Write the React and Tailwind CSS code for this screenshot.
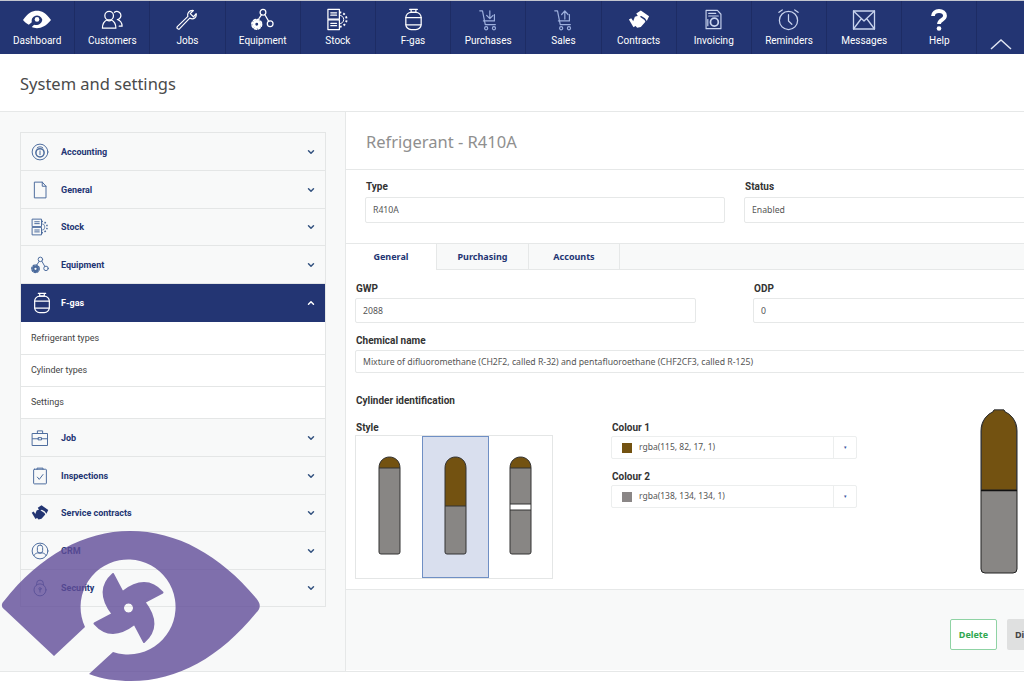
import { ChevronDown, ChevronUp } from 'lucide-react';

const s = { fill: 'none', stroke: 'currentColor', strokeWidth: 1.3, strokeLinecap: 'round', strokeLinejoin: 'round' };

function Svg({ size = 24, className = '', children }) {
	return (
		<svg viewBox="0 0 24 24" width={size} height={size} className={className} {...s}>
			{children}
		</svg>
	);
}

const Eye = (p) => (
	<Svg {...p}>
		<path fill="currentColor" stroke="none" d="M0 12C4 6 8 4 12 4s8 2 12 8c-4 5-8 7-12 7-2 0-3-.4-4.500-1l2-2c3 1 7-1 7-4.500a4.500 4.500 0 1 0-9 2.500l-2.500 2C3 15 1.500 14 0 12z" />
		<circle cx="12" cy="11.500" r="2" fill="currentColor" stroke="none" />
	</Svg>
);
const Customers = (p) => (
	<Svg {...p}>
		<circle cx="8.500" cy="8" r="4.500" />
		<path d="M1.500 21c0-5 2.500-7.500 4.500-8.500 1.500 1 3.500 1 5 0 2 1 4.500 3.500 4.500 8.500z" />
		<path d="M14 4.500a4.200 4.200 0 1 1 3 7.500c2.500.8 5 3 5 7h-3" />
	</Svg>
);
const Wrench = (p) => (
	<Svg {...p}>
		<path d="M15 10 4 21.500c-1 .8-2 .5-2.500-.2-.6-.7-.6-1.600.2-2.400L13 8c-1-3 1-6.500 5-6.500l1 .2-3.500 3.300 3.500 3.500 3-3.500c.8 4-2.500 7-7 5z" />
	</Svg>
);
const Equipment = (p) => (
	<Svg {...p}>
		<circle cx="12.500" cy="4.500" r="3" />
		<circle cx="20" cy="16.500" r="3" />
		<path d="m11 7-3 4.500M14.500 7l4 7" />
		<circle cx="6" cy="17" r="3" strokeWidth="3" />
		<circle cx="6" cy="17" r="5" strokeWidth="1.800" strokeDasharray="2 1.900" />
	</Svg>
);
const Stock = (p) => (
	<Svg {...p}>
		<rect x="2" y="1.500" width="12" height="10" />
		<rect x="2" y="12.500" width="12" height="10" />
		<path d="M5 5h6M5 7.500h6M5 16h6M5 18.500h6" />
		<path d="M14 7.500a4.500 4.500 0 0 1 0 9" strokeWidth="1" />
		<path d="M14 4.500a7.500 7.500 0 0 1 0 15" strokeWidth="2" strokeDasharray="2 2.200" strokeLinecap="butt" />
	</Svg>
);
const Gas = (p) => (
	<Svg {...p}>
		<path d="M8 1.500h8M9.500 1.500v3h5v-3" />
		<rect x="4" y="4.500" width="16" height="18" rx="5.500" />
		<path d="M4 10h16M4 17.500h16" />
	</Svg>
);
const Cart = ({ up, ...p }) => (
	<Svg {...p}>
		<path d="M3 2h3l3 15h11" />
		<path d="M7 13h12V6" />
		<circle cx="10" cy="21" r="1.700" />
		<circle cx="18.500" cy="21" r="1.700" />
		{up ? <path d="M14 11V3m-3.500 3L14 2l3.500 4" /> : <path d="M14 2v8m-3.500-3 3.500 3.500L17.500 7" />}
	</Svg>
);
const Shake = (p) => (
	<Svg {...p}>
		<path fill="currentColor" stroke="none" d="M9 5l5-3.500 9 6.500-2.500 5-2-3-4-2.500-3 1.500zM7.500 8.500l2.500-1 3 1 5 3.500 1 2-5 5.500-4 1-5-5.500z" />
		<path d="M1 11.500l2.500-1.500 5.500 8-3 2z" fill="currentColor" stroke="none" />
	</Svg>
);
const Invoice = (p) => (
	<Svg {...p}>
		<path d="M3.500 1.500h13l4 4.500v16.500h-17z" />
		<path d="M6.500 5h8M6.500 8h11" />
		<circle cx="13" cy="15" r="4.500" strokeWidth="2" />
		<path d="M5.500 12v7" />
	</Svg>
);
const Clock = (p) => (
	<Svg {...p}>
		<circle cx="12" cy="13" r="9.500" />
		<path d="M12 7v6.500l3.500 3.500M2 4.500 5.500 2M22 4.500 18.500 2" />
	</Svg>
);
const Mail = (p) => (
	<Svg {...p}>
		<rect x="1.500" y="3" width="21" height="18" />
		<path d="m1.500 3 10.500 10L22.500 3M1.500 21l7.500-10M22.500 21 15 11" />
	</Svg>
);
const Help = () => (
	<svg viewBox="0 0 18 22" width="18" height="22" fill="none" stroke="currentColor" strokeWidth="3.800">
		<path d="M3 7c0-3 2.500-5 6-5s6 2 6 4.800c0 4.200-6 4-6 8.200" />
		<circle cx="9" cy="19.500" r="2.300" fill="currentColor" stroke="none" />
	</svg>
);
const Money = (p) => (
	<Svg {...p}>
		<circle cx="12" cy="12" r="10.500" />
		<circle cx="12" cy="13" r="5.500" strokeWidth="2" />
		<path d="M8 6.500c1-2 7-2 8 0M12 10.500v5" />
	</Svg>
);
const Doc = (p) => (
	<Svg {...p}>
		<path d="M5 1.500h10l5 5.500v15.500H5zM15 1.500V7h5" />
	</Svg>
);
const Case = (p) => (
	<Svg {...p}>
		<rect x="2" y="6" width="20" height="16" />
		<path d="M8.500 6V2.500h7V6M2 13h8M14 13h8" />
		<rect x="10" y="11.500" width="4" height="3" />
	</Svg>
);
const Check = (p) => (
	<Svg {...p}>
		<rect x="3.500" y="3" width="17" height="19.500" rx="1" />
		<path d="M8 3V1.500h8V3M8.500 13.500l2.500 3 5-6.500" />
	</Svg>
);
const Crm = (p) => (
	<Svg {...p}>
		<circle cx="12" cy="12" r="10.500" />
		<rect x="8.500" y="4" width="7" height="11" rx="3.500" />
		<path d="M4 18c1-2.500 3-3 5-3.500h6c2 .5 4 1 5 3.500" />
	</Svg>
);
const Lock = (p) => (
	<Svg {...p}>
		<circle cx="12" cy="14.500" r="8" />
		<path d="M7.500 8V6a4.500 4.500 0 0 1 9 0v2" />
		<circle cx="12" cy="13" r="1.500" />
		<path d="M12 14.500v3" />
	</Svg>
);

const navItems = [
	{ label: 'Dashboard', icon: <Eye size={28} /> },
	{ label: 'Customers', icon: <Customers size={23} /> },
	{ label: 'Jobs', icon: <Wrench size={22} /> },
	{ label: 'Equipment', icon: <Equipment size={23} /> },
	{ label: 'Stock', icon: <Stock size={23} /> },
	{ label: 'F-gas', icon: <Gas size={23} /> },
	{ label: 'Purchases', icon: <Cart size={22} className="text-[#9db0de]" /> },
	{ label: 'Sales', icon: <Cart up size={22} className="text-[#9db0de]" /> },
	{ label: 'Contracts', icon: <Shake size={22} /> },
	{ label: 'Invoicing', icon: <Invoice size={21} className="text-[#c9d4ee]" /> },
	{ label: 'Reminders', icon: <Clock size={23} className="text-[#c9d4ee]" /> },
	{ label: 'Messages', icon: <Mail size={24} className="text-[#c9d4ee]" /> },
	{ label: 'Help', icon: <Help /> }
];

const sideTop = [
	{ label: 'Accounting', icon: <Money size={18} />, h: 'h-[38px]' },
	{ label: 'General', icon: <Doc size={18} />, h: 'h-[38px]' },
	{ label: 'Stock', icon: <Stock size={18} />, h: 'h-[37px]' },
	{ label: 'Equipment', icon: <Equipment size={18} />, h: 'h-[38px]' }
];

const sideBottom = [
	{ label: 'Job', icon: <Case size={18} />, h: 'h-[38px]' },
	{ label: 'Inspections', icon: <Check size={18} />, h: 'h-[38px]' },
	{ label: 'Service contracts', icon: <Shake size={18} className="text-[#233573]" />, h: 'h-[37px]' },
	{ label: 'CRM', icon: <Crm size={18} />, h: 'h-[38px]' },
	{ label: 'Security', icon: <Lock size={18} />, h: 'h-[37px]' }
];

function SideRow({ label, icon, h }) {
	return (
		<div className={`flex ${h} items-center border-b border-[#e4e6e6] pl-[10px] pr-[8px] text-[#233573]`}>
			<div className="flex w-[30px] justify-start text-[#4a6a9c]">{icon}</div>
			<span className="pt-[2px] font-['Roboto',sans-serif] text-[9px] font-bold">{label}</span>
			<ChevronDown size={10} strokeWidth={3.5} className="ml-auto mr-[1px] text-[#33527f]" />
		</div>
	);
}

function Label({ className = '', children }) {
	return <div className={`pl-[1px] font-['Roboto',sans-serif] text-[10px] font-bold leading-[13px] text-[#333] ${className}`}>{children}</div>;
}

function Field({ label, value, className = '', inputClass = 'h-[26px]', labelClass = 'mb-[4px]' }) {
	return (
		<div className={className}>
			<Label className={labelClass}>{label}</Label>
			<div className={`flex items-center rounded-[2px] border border-[#e6e8e8] bg-white px-[7px] pt-[2px] text-[8.7px] text-[#555] ${inputClass}`}>
				{value}
			</div>
		</div>
	);
}

// small cylinder used in the style picker
function Cylinder({ split, band }) {
	const body = 'M1 96V12C1 5 6 1 11.500 1S22 5 22 12v84a2 2 0 0 1-2 2H3a2 2 0 0 1-2-2z';
	return (
		<svg viewBox="0 0 23 99" width="23" height="99">
			<path d={body} fill="#888684" />
			<path d={`M1 ${split}V12C1 5 6 1 11.500 1S22 5 22 12v${split - 12}z`} fill="#735211" />
			{band && <rect x="1" y="48" width="21" height="6" fill="#fff" />}
			<path d={body} fill="none" stroke="#333" strokeWidth="1" />
			<path d={`M1 ${split}h21`} stroke="#333" strokeWidth="1" />
			{band && <path d="M1 48h21M1 54h21" stroke="#333" strokeWidth="1" />}
		</svg>
	);
}

function ColourSelect({ label, swatch, value }) {
	return (
		<div>
			<Label className="mb-[2px]">{label}</Label>
			<div className="flex h-[23px] w-[246px] items-center rounded-[2px] border border-[#eceeee] bg-white pl-[10px] text-[8.5px] text-[#555]">
				<span className={`mr-[7px] h-[10px] w-[10px] ${swatch}`} />
				{value}
				<span className="ml-auto flex h-full w-[23px] items-center justify-center border-l border-[#eceeee] text-[5px] text-[#3a55a0]">▾</span>
			</div>
		</div>
	);
}

function App() {
	return (
		<div className="relative h-[682px] w-[1024px] overflow-hidden bg-white font-['Noto_Sans',sans-serif]">
			{/* top nav */}
			<div className="flex h-[54px] border-t border-[#c3c6cf] bg-[#233573] text-white">
				{navItems.map((item) => (
					<div key={item.label} className="flex w-[75.2px] flex-col items-center border-r border-[#1d2c64] pt-[6px]">
						<div className="flex h-[25px] items-center justify-center">{item.icon}</div>
						<div className="mt-[2px] font-['Roboto',sans-serif] text-[10px] leading-[13px]">{item.label}</div>
					</div>
				))}
				<div className="flex flex-1 items-end justify-center pb-[4px]">
					<svg viewBox="0 0 22 12" width="22" height="12" fill="none" stroke="#dfe4f2" strokeWidth="1.500">
						<path d="m1 11 10-9 10 9" />
					</svg>
				</div>
			</div>

			{/* page title */}
			<div className="flex h-[58px] items-center border-b border-[#e6e8e8] pl-[20px] pt-[3px] text-[16.5px] text-[#4a4a4a]">
				System and settings
			</div>

			<div className="flex h-[560px] border-b border-[#e6e8e8]">
				{/* settings menu */}
				<div className="w-[346px] shrink-0 border-r border-[#e6e8e8] bg-[#f8f9f9] px-[20px] pt-[20px]">
					<div className="w-[306px] border border-b-0 border-[#e4e6e6]">
						{sideTop.map((row) => (
							<SideRow key={row.label} {...row} />
						))}
						<div className="flex h-[38px] items-center bg-[#233573] pl-[10px] pr-[8px] text-white">
							<div className="flex w-[30px]"><Gas size={22} /></div>
							<span className="pt-[2px] font-['Roboto',sans-serif] text-[9px] font-bold">F-gas</span>
							<ChevronUp size={10} strokeWidth={3.5} className="ml-auto mr-[1px]" />
						</div>
						<div className="bg-white font-['Roboto',sans-serif] text-[9px] text-[#444]">
							<div className="flex h-[33px] items-center border-b border-[#e4e6e6] pl-[10px] pt-[2px]">Refrigerant types</div>
							<div className="flex h-[32px] items-center border-b border-[#e4e6e6] pl-[10px]">Cylinder types</div>
							<div className="flex h-[32px] items-center border-b border-[#e4e6e6] pl-[10px]">Settings</div>
						</div>
						{sideBottom.map((row) => (
							<SideRow key={row.label} {...row} />
						))}
					</div>
				</div>

				{/* refrigerant details */}
				<div className="min-w-0 flex-1 overflow-hidden">
					<div className="flex h-[58px] items-center border-b border-[#e6e8e8] pl-[20px] pt-[4px] text-[16.5px] text-[#8f8f8f]">
						Refrigerant - R410A
					</div>
					<div className="flex gap-[19px] pl-[19px] pt-[10px]">
						<Field label="Type" value="R410A" className="w-[360px] shrink-0" />
						<Field label="Status" value="Enabled" className="w-[400px] shrink-0" />
					</div>
					<div className="mt-[20px] flex h-[27px] border-y border-[#e6e8e8] bg-[#f8f9f9] text-[9px] font-bold text-[#233573]">
						<div className="-mb-px flex w-[91px] items-center justify-center border-r border-[#e6e8e8] bg-white">General</div>
						<div className="flex w-[92px] items-center justify-center border-r border-[#e6e8e8]">Purchasing</div>
						<div className="flex w-[91px] items-center justify-center border-r border-[#e6e8e8]">Accounts</div>
					</div>
					<div className="pl-[9px]">
						<div className="mt-[12px] flex gap-[57px]">
							<Field label="GWP" value="2088" className="w-[341px] shrink-0" inputClass="h-[25px]" labelClass="mb-[3px]" />
							<Field label="ODP" value="0" className="w-[400px] shrink-0" inputClass="h-[25px]" labelClass="mb-[3px]" />
						</div>
						<Field
							label="Chemical name"
							value="Mixture of difluoromethane (CH2F2, called R-32) and pentafluoroethane (CHF2CF3, called R-125)"
							className="mt-[11px] w-[760px]"
							inputClass="h-[23px]"
							labelClass="mb-[3px]"
						/>
						<Label className="mt-[21px]">Cylinder identification</Label>
						<div className="mt-[14px] flex">
							<div className="w-[198px] shrink-0">
								<Label className="mb-[1px]">Style</Label>
								<div className="flex h-[144px] border border-[#e4e6e6]">
									<div className="flex w-[66px] justify-center pt-[20px]"><Cylinder split={12} /></div>
									<div className="flex w-[67px] justify-center border border-[#6f8fc4] bg-[#d9dfee] pt-[19px]"><Cylinder split={50} /></div>
									<div className="flex flex-1 justify-center pt-[20px]"><Cylinder split={12} band /></div>
								</div>
							</div>
							<div className="ml-[58px] flex w-[246px] shrink-0 flex-col gap-[11px]">
								<ColourSelect label="Colour 1" swatch="bg-[#735211]" value="rgba(115, 82, 17, 1)" />
								<ColourSelect label="Colour 2" swatch="bg-[#8a8686]" value="rgba(138, 134, 134, 1)" />
							</div>
							<div className="-mt-[12px] ml-[123px] shrink-0">
								<svg viewBox="0 0 38 165" width="38" height="165">
									<path d="M1 160V22C1 11 8 5 13 3l1-2h10l1 2c5 2 12 8 12 19v138a4 4 0 0 1-4 4H5a4 4 0 0 1-4-4z" fill="#888684" stroke="#222" strokeWidth="1" />
									<path d="M1.500 81V22C1.500 11 8 5 13 3l1-2h10l1 2c5 2 11.500 8 11.500 19v59z" fill="#735211" stroke="#333" strokeWidth="0.800" />
									<path d="M1 81.500h36" stroke="#111" strokeWidth="1.400" />
								</svg>
							</div>
						</div>
					</div>
					{/* footer actions */}
					<div className="mt-[10px] flex h-[81px] items-center gap-[10px] border-t border-[#e6e8e8] bg-[#f8f9f9] pl-[604px] pt-[9px]">
						<div className="flex h-[31px] w-[47px] shrink-0 items-center justify-center rounded-[2px] border border-[#8fd3a4] bg-white text-[9px] font-bold text-[#2fa84f]">Delete</div>
						<div className="flex h-[31px] w-[60px] shrink-0 items-center rounded-[2px] bg-[#dfe0e0] pl-[8px] text-[9px] font-bold text-[#444]">Disable</div>
					</div>
				</div>
			</div>

			{/* watermark logo */}
			<svg viewBox="0 528 264 154" className="absolute bottom-0 left-0 h-[154px] w-[264px]">
				<g opacity="0.8" fill="#614d99">
					<path d="M4 601C40 555 85 531 130 531c47 0 90 24 126 67 5 6 5 10 0 15-36 44-78 68-125 68-15 0-29-2-42-7l24-22A47.500 47.500 0 1 0 85 627l-31 29-49-46c-4-3-4-6-1-9z" />
					<path
						fillRule="evenodd"
						stroke="#614d99"
						strokeWidth="2"
						strokeLinejoin="round"
						d="M113 574 122.500 592Q146 574 162.500 592.500L144.500 602Q162.500 625.500 144 642L134.500 624Q111 642 94.500 623.500L112.500 614Q94.500 590.500 113 574zM128.500 602.500a5.500 5.500 0 1 0 .01 0z"
					/>
				</g>
			</svg>
		</div>
	);
}

export default App;
